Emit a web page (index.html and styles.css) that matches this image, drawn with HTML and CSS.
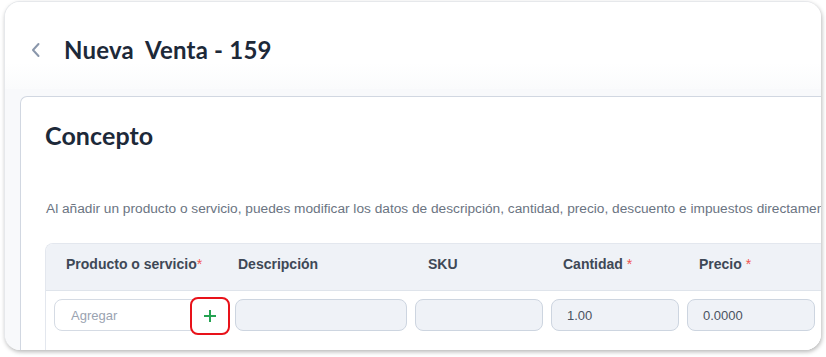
FILE: index.html
```html
<!DOCTYPE html>
<html lang="es">
<head>
<meta charset="utf-8">
<link rel="stylesheet" href="styles.css">
</head>
<body>
<div class="frame">
  <header class="topbar">
    <svg class="back" width="12" height="16" viewBox="0 0 12 16"><path d="M8.5 2 L3 8 L8.5 14" fill="none" stroke="#8a97ab" stroke-width="2" stroke-linecap="round" stroke-linejoin="round"/></svg>
    <h1 class="title">Nueva&nbsp; Venta - 159</h1>
  </header>
  <main class="body">
    <section class="card">
      <h2 class="card-title">Concepto</h2>
      <p class="hint">Al añadir un producto o servicio, puedes modificar los datos de descripción, cantidad, precio, descuento e impuestos directamente en la tabla.</p>
      <div class="table">
        <div class="thead">
          <div class="th c1">Producto o servicio<span class="req">*</span></div>
          <div class="th c2">Descripción</div>
          <div class="th c3">SKU</div>
          <div class="th c4">Cantidad <span class="req">*</span></div>
          <div class="th c5">Precio <span class="req">*</span></div>
        </div>
        <div class="trow">
          <div class="cell c1">
            <div class="prod">
              <span class="ph">Agregar</span>
              <span class="add"><svg width="14" height="14" viewBox="0 0 14 14"><path d="M7 1 V13 M1 7 H13" stroke="#25a352" stroke-width="2"/></svg></span>
            </div>
          </div>
          <div class="cell c2"><div class="inp w172"></div></div>
          <div class="cell c3"><div class="inp"></div></div>
          <div class="cell c4"><div class="inp">1.00</div></div>
          <div class="cell c5"><div class="inp">0.0000</div></div>
        </div>
      </div>
    </section>
  </main>
</div>
</body>
</html>
```
FILE: styles.css
```css
* { box-sizing: border-box; }
html, body { margin: 0; padding: 0; background: #ffffff; }
body { width: 826px; height: 357px; overflow: hidden; padding: 1px 5px 0 4px; }
.frame {
  width: 817px;
  height: 349px;
  border-radius: 16px;
  overflow: hidden;
  background: #ffffff;
  border: 1px solid #e6e8eb;
  border-bottom: none;
  border-right: none;
  box-shadow: 1px 2px 4px rgba(0,0,0,0.28);
  display: flex;
  flex-direction: column;
}
.topbar {
  height: 87px;
  flex: none;
  display: flex;
  align-items: center;
  padding-left: 25px;
  padding-top: 8px;
  background: linear-gradient(#ffffff 70%, #fafbfc);
}
.back { margin-right: 22px; }
.title {
  margin: 0;
  font-family: "Lato", sans-serif;
  font-weight: 700;
  font-size: 24px;
  color: #1d2939;
  letter-spacing: 0.2px;
}
.body {
  flex: 1;
  background: #f8f9fb;
  padding: 7px 0 0 15px;
  overflow: hidden;
}
.card {
  background: #ffffff;
  border: 1px solid #d1d7e1;
  border-right: none;
  border-bottom: none;
  border-top-left-radius: 7px;
  width: 820px;
  height: 300px;
  padding: 24px 0 0 24px;
}
.card-title {
  margin: 0;
  font-family: "Lato", sans-serif;
  font-weight: 700;
  font-size: 25px;
  color: #1d2939;
  letter-spacing: 0.1px;
  line-height: 28px;
}
.hint {
  margin: 51px 0 0 1px;
  font-family: "Liberation Sans", Arial, sans-serif;
  font-size: 13.7px;
  color: #6b7482;
  white-space: nowrap;
  line-height: 17px;
}
.table {
  margin-top: 26px;
  border: 1px solid #e3e7ee;
  border-right: none;
  border-bottom: none;
  border-top-left-radius: 8px;
  width: 800px;
  overflow: hidden;
}
.thead, .trow {
  display: grid;
  grid-template-columns: 181px 180px 136px 136px 136px;
  padding-left: 8px;
}
.thead {
  height: 47px;
  align-items: start;
  padding-top: 12px;
  background: #eff2f7;
  border-bottom: 1px solid #dfe4eb;
}
.th {
  font-family: "Liberation Sans", Arial, sans-serif;
  font-weight: 700;
  font-size: 14px;
  line-height: 16px;
  color: #3e4856;
}
.req { color: #ef5350; font-weight: 400; }
.th.c1 { padding-left: 12px; }
.th.c2 { padding-left: 3px; }
.th.c3 { padding-left: 13px; }
.th.c4 { padding-left: 12px; }
.th.c5 { padding-left: 12px; }
.trow {
  padding-top: 8px;
  height: 60px;
}
.prod {
  position: relative;
  width: 176px;
  height: 32px;
  border: 1px solid #d5dbe4;
  border-radius: 8px;
  display: flex;
  align-items: center;
  padding-left: 16px;
  background: #fff;
}
.ph {
  font-family: "Liberation Sans", Arial, sans-serif;
  font-size: 13px;
  color: #9aa3b1;
}
.add {
  position: absolute;
  right: -1px;
  top: -3px;
  width: 40px;
  height: 38px;
  border: 2.5px solid #e8121a;
  border-radius: 8px;
  display: flex;
  align-items: center;
  justify-content: center;
  background: #fff;
}
.inp {
  width: 128px;
  height: 32px;
  border: 1px solid #cdd5e0;
  border-radius: 8px;
  background: #eff2f7;
  display: flex;
  align-items: center;
  padding-left: 15px;
  font-family: "Liberation Sans", Arial, sans-serif;
  font-size: 13px;
  color: #4a5361;
}
.inp.w172 { width: 172px; }
```
